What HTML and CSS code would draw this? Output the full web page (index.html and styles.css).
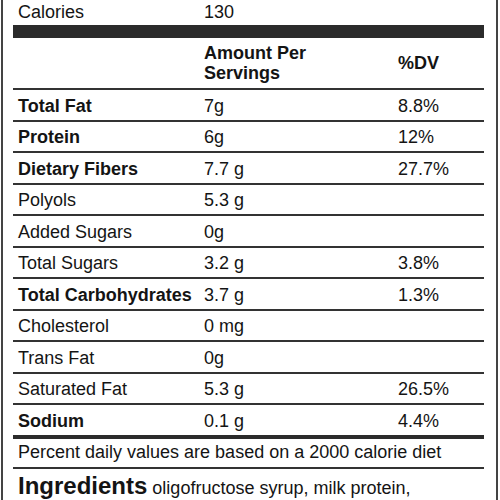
FILE: index.html
```html
<!DOCTYPE html>
<html lang="en">
<head>
    <meta charset="UTF-8">
    <meta name="viewport" content="width=device-width, initial-scale=1.0">
    <title>Nutrition Facts</title>
    <link rel="stylesheet" href="styles.css">
</head>
<body>
    <div class="label">
        <div class="calories-row">
            <span class="cell-name">Calories</span>
            <span>130</span>
            <span></span>
        </div>
        <div class="thick-bar"></div>

        <div class="row header-row">
            <span></span>
            <span>Amount Per<br>Servings</span>
            <span>%DV</span>
        </div>

        <div class="row bold"><span class="cell-name">Total Fat</span><span class="cell-value">7g</span><span class="cell-dv">8.8%</span></div>
        <div class="row bold"><span class="cell-name">Protein</span><span class="cell-value">6g</span><span class="cell-dv">12%</span></div>
        <div class="row bold"><span class="cell-name">Dietary Fibers</span><span class="cell-value">7.7 g</span><span class="cell-dv">27.7%</span></div>
        <div class="row"><span class="cell-name">Polyols</span><span class="cell-value">5.3 g</span><span class="cell-dv"></span></div>
        <div class="row"><span class="cell-name">Added Sugars</span><span class="cell-value">0g</span><span class="cell-dv"></span></div>
        <div class="row"><span class="cell-name">Total Sugars</span><span class="cell-value">3.2 g</span><span class="cell-dv">3.8%</span></div>
        <div class="row bold"><span class="cell-name">Total Carbohydrates</span><span class="cell-value">3.7 g</span><span class="cell-dv">1.3%</span></div>
        <div class="row"><span class="cell-name">Cholesterol</span><span class="cell-value">0 mg</span><span class="cell-dv"></span></div>
        <div class="row"><span class="cell-name">Trans Fat</span><span class="cell-value">0g</span><span class="cell-dv"></span></div>
        <div class="row"><span class="cell-name">Saturated Fat</span><span class="cell-value">5.3 g</span><span class="cell-dv">26.5%</span></div>
        <div class="row bold last-row"><span class="cell-name">Sodium</span><span class="cell-value">0.1 g</span><span class="cell-dv">4.4%</span></div>

        <p class="footnote">Percent daily values are based on a 2000 calorie diet</p>

        <p class="ingredients">
            <span class="ingredients-title">Ingredients</span>
            oligofructose syrup, milk protein, polydextrose, cocoa butter
        </p>
    </div>
</body>
</html>
```

FILE: styles.css
```css
body, html {
    margin: 0;
    padding: 0;
    background: white;
    font-family: "Liberation Sans", Arial, sans-serif;
    color: #141414;
    overflow: hidden;
}
.label {
    margin: 0 2px 0 1px;
    height: 500px;
    border-left: 2px solid #444;
    border-right: 2px solid #444;
    padding: 0 12px 0 10px;
    font-size: 18px;
    line-height: 20px;
}
.calories-row,
.row {
    display: grid;
    grid-template-columns: 186px 194px 1fr;
    padding-left: 5px;
}
.calories-row {
    padding-top: 2px;
    padding-bottom: 3px;
}
.thick-bar {
    height: 13px;
    background: #2b2b2b;
}
.row {
    padding-top: 5.5px;
    padding-bottom: 4px;
    border-bottom: 2px solid #333;
}
.header-row {
    font-weight: bold;
    padding-top: 5px;
    padding-bottom: 5px;
    align-items: center;
}
.bold .cell-name {
    font-weight: bold;
}
.last-row {
    border-bottom: 4px solid #2b2b2b;
}
.footnote {
    margin: 0;
    padding: 3px 0 5px 5px;
    border-bottom: 2px solid #333;
}
.ingredients {
    margin: 0;
    padding: 3px 0 0 5px;
    line-height: 28px;
}
.ingredients-title {
    font-size: 24px;
    font-weight: bold;
}
```
